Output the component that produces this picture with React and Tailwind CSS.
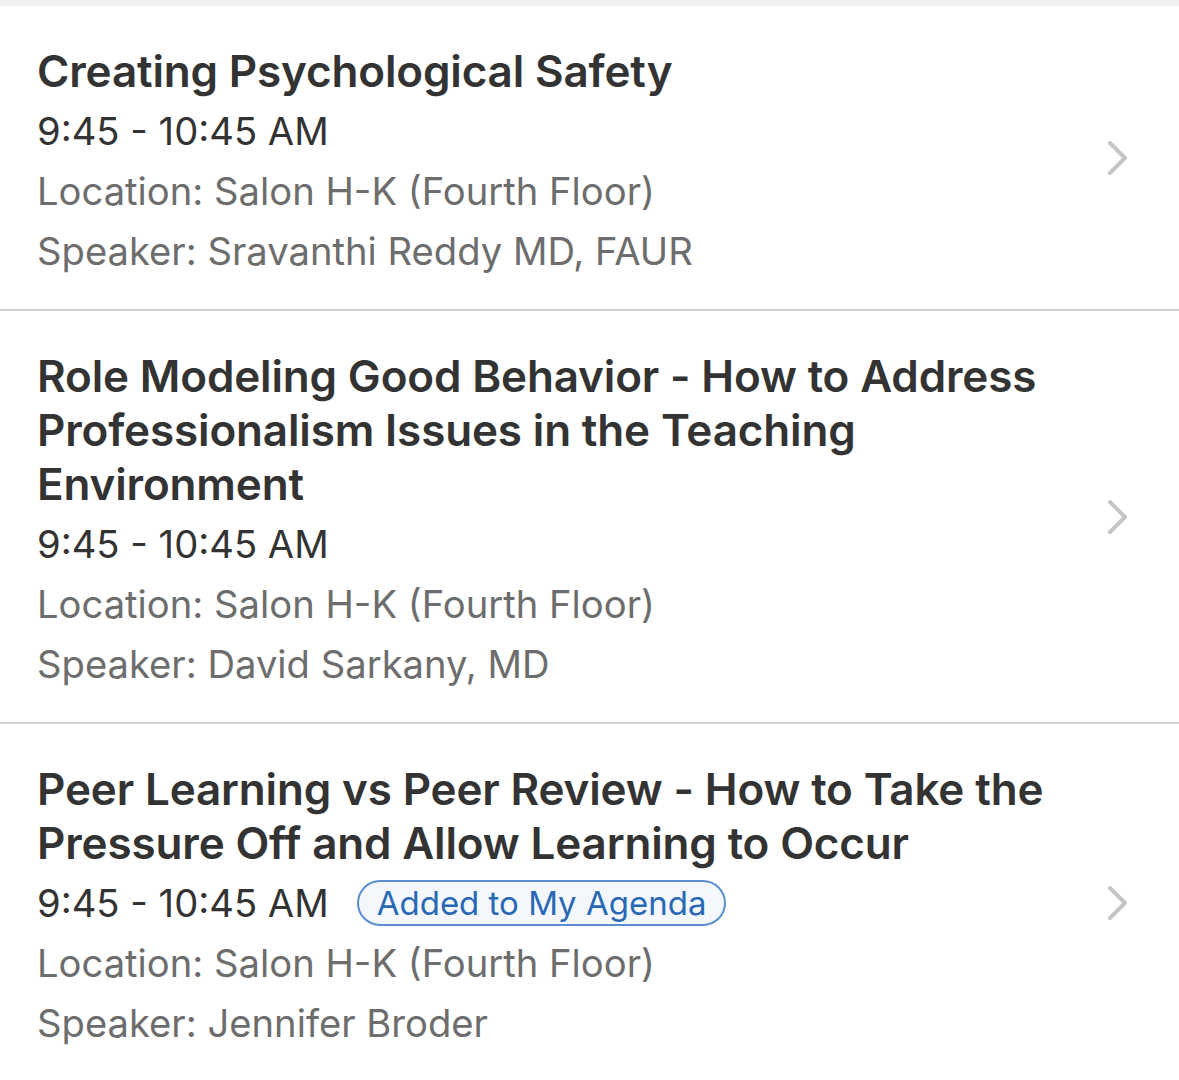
const sessions = [
  {
    title: "Creating Psychological Safety",
    time: "9:45 - 10:45 AM",
    location: "Salon H-K (Fourth Floor)",
    speaker: "Sravanthi Reddy MD, FAUR",
  },
  {
    title: "Role Modeling Good Behavior - How to Address Professionalism Issues in the Teaching Environment",
    time: "9:45 - 10:45 AM",
    location: "Salon H-K (Fourth Floor)",
    speaker: "David Sarkany, MD",
  },
  {
    title: "Peer Learning vs Peer Review - How to Take the Pressure Off and Allow Learning to Occur",
    time: "9:45 - 10:45 AM",
    location: "Salon H-K (Fourth Floor)",
    speaker: "Jennifer Broder",
    added: true,
  },
];

function Chevron() {
  return (
    <svg width="26" height="40" viewBox="0 0 26 40" fill="none" className="shrink-0">
      <path d="M5 5 L20 20 L5 35" stroke="#c5c5c7" strokeWidth="4" strokeLinecap="round" strokeLinejoin="round" />
    </svg>
  );
}

function SessionRow({ session, last }) {
  return (
    <div className={`flex items-center pl-[37px] pr-[48px] ${last ? "" : "border-b-2 border-[#cfcfd1]"}`}>
      <div className="flex-1 pt-[38px] pb-[28px]">
        {/* Title */}
        <div className="text-[44px] leading-[54px] font-semibold text-[#333333] tracking-[-0.15px]">
          {session.title}
        </div>
        <div className="flex items-center gap-[28px] text-[38.2px] leading-[60px] text-[#333333] mt-[3px]">
          <span>{session.time}</span>
          {session.added && (
            <span className="border-2 border-[#5a8fcf] bg-[#f4f8fd] text-[#2968b4] rounded-full text-[33px] leading-[42px] px-[18px]">
              Added to My Agenda
            </span>
          )}
        </div>
        <div className="text-[38.2px] leading-[60px] text-[#6d6d6d]">Location: {session.location}</div>
        <div className="text-[38.2px] leading-[60px] text-[#6d6d6d]">Speaker: {session.speaker}</div>
      </div>
      <Chevron />
    </div>
  );
}

export default function App() {
  return (
    <div className="w-[1179px] h-[1080px] bg-white overflow-hidden" style={{ fontFamily: "Inter, 'Noto Sans', sans-serif" }}>
      <div className="h-[6px] bg-[#f1efef]" />
      {sessions.map((s, i) => (
        <SessionRow key={i} session={s} last={i === sessions.length - 1} />
      ))}
    </div>
  );
}
